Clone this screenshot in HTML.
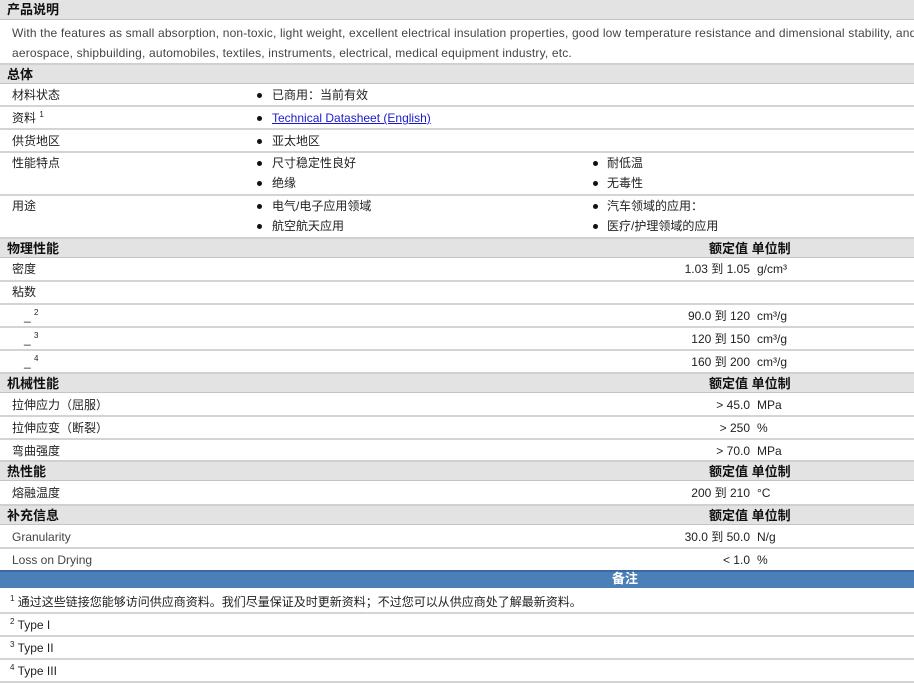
<!DOCTYPE html>
<html><head><meta charset="utf-8"><style>
*{margin:0;padding:0;box-sizing:border-box}
body{width:914px;height:683px;background:#fff;font-family:"Liberation Sans","Noto Sans CJK SC",sans-serif;font-size:12px;color:#222;position:relative;overflow:hidden}
.a{position:absolute;white-space:nowrap;line-height:14px}
.h{position:absolute;left:0;width:914px;background:#e3e3e3;border-top:2px solid #d0d0d0;border-bottom:1px solid #c4c4c4}
.h b{position:absolute;left:7px;top:3px;font-size:13px;line-height:14px;color:#111}
.h .r{position:absolute;left:709px;top:3px;font-size:13px;font-weight:bold;line-height:14px;color:#111}
.l{position:absolute;left:0;width:914px;height:0;border-top:2px solid #d4d4d4}
.v{position:absolute;right:164px;white-space:nowrap;line-height:14px}
.u{position:absolute;left:757px;white-space:nowrap;line-height:14px}
.d{position:absolute;width:5px;height:5px;border-radius:50%;background:#111}
sup{font-size:8px;vertical-align:top;position:relative;top:-3px}
a{color:#1a1acc}
</style></head><body>
<div class="h" style="top:0;height:20px;border-top:0"><b>产品说明</b></div>
<div class="a" style="left:12px;top:26px;color:#444;letter-spacing:0.17px">With the features as small absorption, non-toxic, light weight, excellent electrical insulation properties, good low temperature resistance and dimensional stability, and</div>
<div class="a" style="left:12px;top:46px;color:#444;letter-spacing:0.17px">aerospace, shipbuilding, automobiles, textiles, instruments, electrical, medical equipment industry, etc.</div>
<div class="h" style="top:63px;height:21px"><b>总体</b></div>
<div class="a" style="left:12px;top:88px">材料状态</div>
<div class="d" style="left:257px;top:93px"></div><div class="a" style="left:272px;top:88px">已商用：当前有效</div>
<div class="l" style="top:105px"></div>
<div class="a" style="left:12px;top:111px">资料 <sup>1</sup></div>
<div class="d" style="left:257px;top:116px"></div><div class="a" style="left:272px;top:111px"><a href="#">Technical Datasheet (English)</a></div>
<div class="l" style="top:128px"></div>
<div class="a" style="left:12px;top:134px">供货地区</div>
<div class="d" style="left:257px;top:139px"></div><div class="a" style="left:272px;top:134px">亚太地区</div>
<div class="l" style="top:151px"></div>
<div class="a" style="left:12px;top:156px">性能特点</div>
<div class="d" style="left:257px;top:161px"></div><div class="a" style="left:272px;top:156px">尺寸稳定性良好</div>
<div class="d" style="left:257px;top:181px"></div><div class="a" style="left:272px;top:176px">绝缘</div>
<div class="d" style="left:593px;top:161px"></div><div class="a" style="left:607px;top:156px">耐低温</div>
<div class="d" style="left:593px;top:181px"></div><div class="a" style="left:607px;top:176px">无毒性</div>
<div class="l" style="top:194px"></div>
<div class="a" style="left:12px;top:199px">用途</div>
<div class="d" style="left:257px;top:204px"></div><div class="a" style="left:272px;top:199px">电气/电子应用领域</div>
<div class="d" style="left:257px;top:224px"></div><div class="a" style="left:272px;top:219px">航空航天应用</div>
<div class="d" style="left:593px;top:204px"></div><div class="a" style="left:607px;top:199px">汽车领域的应用：</div>
<div class="d" style="left:593px;top:224px"></div><div class="a" style="left:607px;top:219px">医疗/护理领域的应用</div>
<div class="h" style="top:237px;height:21px"><b>物理性能</b><span class="r">额定值 单位制</span></div>
<div class="a" style="left:12px;top:262px">密度</div><div class="v" style="top:262px">1.03 到 1.05</div><div class="u" style="top:262px">g/cm³</div>
<div class="l" style="top:280px"></div>
<div class="a" style="left:12px;top:285px">粘数</div>
<div class="l" style="top:303px"></div>
<div class="a" style="left:24px;top:309px">_ <sup>2</sup></div><div class="v" style="top:309px">90.0 到 120</div><div class="u" style="top:309px">cm³/g</div>
<div class="l" style="top:326px"></div>
<div class="a" style="left:24px;top:332px">_ <sup>3</sup></div><div class="v" style="top:332px">120 到 150</div><div class="u" style="top:332px">cm³/g</div>
<div class="l" style="top:349px"></div>
<div class="a" style="left:24px;top:355px">_ <sup>4</sup></div><div class="v" style="top:355px">160 到 200</div><div class="u" style="top:355px">cm³/g</div>
<div class="h" style="top:372px;height:21px"><b>机械性能</b><span class="r">额定值 单位制</span></div>
<div class="a" style="left:12px;top:398px">拉伸应力（屈服）</div><div class="v" style="top:398px">&gt; 45.0</div><div class="u" style="top:398px">MPa</div>
<div class="l" style="top:415px"></div>
<div class="a" style="left:12px;top:421px">拉伸应变（断裂）</div><div class="v" style="top:421px">&gt; 250</div><div class="u" style="top:421px">%</div>
<div class="l" style="top:438px"></div>
<div class="a" style="left:12px;top:444px">弯曲强度</div><div class="v" style="top:444px">&gt; 70.0</div><div class="u" style="top:444px">MPa</div>
<div class="h" style="top:460px;height:21px"><b>热性能</b><span class="r">额定值 单位制</span></div>
<div class="a" style="left:12px;top:486px">熔融温度</div><div class="v" style="top:486px">200 到 210</div><div class="u" style="top:486px">°C</div>
<div class="h" style="top:504px;height:21px"><b>补充信息</b><span class="r">额定值 单位制</span></div>
<div class="a" style="left:12px;top:530px;color:#444">Granularity</div><div class="v" style="top:530px">30.0 到 50.0</div><div class="u" style="top:530px">N/g</div>
<div class="l" style="top:547px"></div>
<div class="a" style="left:12px;top:553px;color:#444">Loss on Drying</div><div class="v" style="top:553px">&lt; 1.0</div><div class="u" style="top:553px">%</div>
<div style="position:absolute;left:0;top:570px;width:914px;height:18px;background:#4a7fb8;border-top:2px solid #3a6aa0"></div>
<div class="a" style="left:612px;top:572px;color:#fff;font-weight:bold;font-size:13px">备注</div>
<div class="a" style="left:10px;top:595px"><sup>1</sup> 通过这些链接您能够访问供应商资料。我们尽量保证及时更新资料；不过您可以从供应商处了解最新资料。</div>
<div class="l" style="top:612px"></div>
<div class="a" style="left:10px;top:618px"><sup>2</sup> Type I</div>
<div class="l" style="top:635px"></div>
<div class="a" style="left:10px;top:641px"><sup>3</sup> Type II</div>
<div class="l" style="top:658px"></div>
<div class="a" style="left:10px;top:664px"><sup>4</sup> Type III</div>
<div class="l" style="top:681px"></div>
</body></html>
